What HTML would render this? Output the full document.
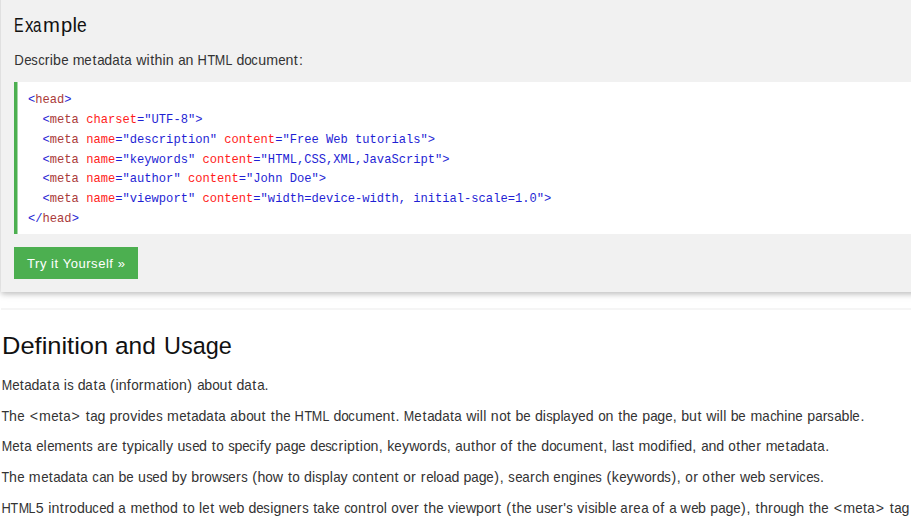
<!DOCTYPE html>
<html><head><meta charset="utf-8">
<style>
html,body{margin:0;padding:0;background:#fff;width:911px;height:519px;overflow:hidden;position:relative}
body{font-family:"Liberation Sans",sans-serif;color:#000}
.ex{position:absolute;left:1px;top:-20px;width:1000px;height:312px;background:#f1f1f1;box-shadow:0 2px 5px 0 rgba(0,0,0,.16),0 2px 8px 0 rgba(0,0,0,.12)}
.t{position:absolute;white-space:pre;left:0}
.p{font-size:14.2px;line-height:20px;color:#333}
.code{position:absolute;left:14px;top:82px;width:1000px;height:152px;background:#fff}
.g1{position:absolute;left:14px;top:82px;width:3px;height:152px;background:#4CAF50}
.g2{position:absolute;left:17px;top:82px;width:1px;height:152px;background:#a5d7a7}
.cl{position:absolute;white-space:pre;font-family:"Liberation Mono",monospace;font-size:12.12px;line-height:20px;color:#1f1fd4;left:28px}
.tn{color:#aa3a3a}.an{color:#ff1c1c}
.btn{position:absolute;left:14px;top:247px;width:124px;height:32px;background:#4CAF50}
.hr{position:absolute;left:1px;top:308px;width:1000px;height:2px;background:#f5f5f5}
.h2{top:332px;font-size:23.7px;line-height:28px;transform-origin:0 0;color:#111}
.w{position:absolute;left:0;width:911px;height:20px}.w span{position:absolute;top:0;white-space:pre;transform-origin:0 0}.w i{position:absolute;top:0;white-space:pre;font-style:normal}
.hx{position:absolute;left:0;top:13px;width:200px;height:24px;font-size:20.5px;line-height:24px;color:#111}.hx span{position:absolute;top:0;white-space:pre;transform-origin:0 0}
</style></head><body>
<div class="ex"></div>
<div class="hx"><span style="left:14.38px;transform:scaleX(0.700)">E</span><span style="left:24.69px;transform:scaleX(0.831)">x</span><span style="left:33.37px;transform:scaleX(0.733)">a</span><span style="left:43.32px;transform:scaleX(0.989)">m</span><span style="left:60.67px;transform:scaleX(0.984)">p</span><span style="left:72.42px;transform:scaleX(1.000)">l</span><span style="left:77.45px;transform:scaleX(0.853)">e</span></div>
<div class="code"></div><div class="g1"></div><div class="g2"></div>
<div class="cl" style="top:90px">&lt;<span class="tn">head</span>&gt;</div>
<div class="cl" style="top:110px">  &lt;<span class="tn">meta</span> <span class="an">charset</span>="UTF-8"&gt;</div>
<div class="cl" style="top:130px">  &lt;<span class="tn">meta</span> <span class="an">name</span>="description" <span class="an">content</span>="Free Web tutorials"&gt;</div>
<div class="cl" style="top:150px">  &lt;<span class="tn">meta</span> <span class="an">name</span>="keywords" <span class="an">content</span>="HTML,CSS,XML,JavaScript"&gt;</div>
<div class="cl" style="top:169px">  &lt;<span class="tn">meta</span> <span class="an">name</span>="author" <span class="an">content</span>="John Doe"&gt;</div>
<div class="cl" style="top:189px">  &lt;<span class="tn">meta</span> <span class="an">name</span>="viewport" <span class="an">content</span>="width=device-width, initial-scale=1.0"&gt;</div>
<div class="cl" style="top:209px">&lt;/<span class="tn">head</span>&gt;</div>
<div class="btn"></div>
<div class="t" style="left:27px;top:256px;font-size:13px;line-height:16px;color:#fff;letter-spacing:0.55px">Try it Yourself »</div>
<div class="hr"></div>
<div class="t h2" style="left:2px;transform:scaleX(1.075)">Definition</div><div class="t h2" style="left:115px;transform:scaleX(1.03)">and</div><div class="t h2" style="left:164px;transform:scaleX(0.99)">Usage</div>
<div class="w p" style="top:50px"><i style="left:14.16px;transform:scaleX(0.933)">D</i><i style="left:23.81px;transform:scaleX(0.937)">e</i><i style="left:31.13px;transform:scaleX(0.911)">s</i><i style="left:37.59px;transform:scaleX(0.911)">c</i><i style="left:44.65px">r</i><i style="left:49.79px">i</i><i style="left:52.98px">b</i><i style="left:60.54px;transform:scaleX(0.937)">e</i><i style="left:72.66px">m</i><i style="left:84.36px;transform:scaleX(0.937)">e</i><i style="left:92.47px">t</i><i style="left:96.67px;transform:scaleX(0.944)">a</i><i style="left:104.26px">d</i><i style="left:111.84px;transform:scaleX(0.944)">a</i><i style="left:119.98px">t</i><i style="left:124.18px;transform:scaleX(0.944)">a</i><i style="left:136.16px">w</i><i style="left:146.48px">i</i><i style="left:150.23px">t</i><i style="left:154.62px">h</i><i style="left:162.61px">i</i><i style="left:165.87px">n</i><i style="left:177.89px;transform:scaleX(0.944)">a</i><i style="left:185.54px">n</i><i style="left:197.31px;transform:scaleX(0.910)">H</i><i style="left:206.58px;transform:scaleX(0.881)">T</i><i style="left:214.05px;transform:scaleX(0.884)">M</i><i style="left:224.70px;transform:scaleX(0.875)">L</i><i style="left:236.38px">d</i><i style="left:244.00px;transform:scaleX(0.954)">o</i><i style="left:251.40px;transform:scaleX(0.911)">c</i><i style="left:258.15px">u</i><i style="left:266.14px">m</i><i style="left:277.84px;transform:scaleX(0.937)">e</i><i style="left:285.46px">n</i><i style="left:293.79px">t</i><i style="left:299.05px">:</i></div>
<div class="w p" style="top:375px"><i style="left:0.81px;transform:scaleX(0.884)">M</i><i style="left:11.70px;transform:scaleX(0.937)">e</i><i style="left:19.81px">t</i><i style="left:24.01px;transform:scaleX(0.944)">a</i><i style="left:31.60px">d</i><i style="left:39.19px;transform:scaleX(0.944)">a</i><i style="left:47.33px">t</i><i style="left:51.53px;transform:scaleX(0.944)">a</i><i style="left:63.68px">i</i><i style="left:66.64px;transform:scaleX(0.911)">s</i><i style="left:77.70px">d</i><i style="left:85.29px;transform:scaleX(0.944)">a</i><i style="left:93.43px">t</i><i style="left:97.63px;transform:scaleX(0.944)">a</i><i style="left:110.11px">(</i><i style="left:115.42px">i</i><i style="left:118.67px">n</i><i style="left:126.75px">f</i><i style="left:130.72px;transform:scaleX(0.954)">o</i><i style="left:138.71px">r</i><i style="left:143.85px">m</i><i style="left:155.57px;transform:scaleX(0.944)">a</i><i style="left:163.71px">t</i><i style="left:168.25px">i</i><i style="left:171.35px;transform:scaleX(0.954)">o</i><i style="left:179.03px">n</i><i style="left:187.35px">)</i><i style="left:196.68px;transform:scaleX(0.944)">a</i><i style="left:204.27px">b</i><i style="left:211.89px;transform:scaleX(0.954)">o</i><i style="left:219.58px">u</i><i style="left:227.92px">t</i><i style="left:236.62px">d</i><i style="left:244.21px;transform:scaleX(0.944)">a</i><i style="left:252.35px">t</i><i style="left:256.55px;transform:scaleX(0.944)">a</i><i style="left:264.50px">.</i></div>
<div class="w p" style="top:406px"><i style="left:0.98px;transform:scaleX(0.881)">T</i><i style="left:9.12px">h</i><i style="left:16.74px;transform:scaleX(0.937)">e</i><i style="left:29.67px">&lt;</i><i style="left:39.00px">m</i><i style="left:50.70px;transform:scaleX(0.937)">e</i><i style="left:58.81px">t</i><i style="left:63.01px;transform:scaleX(0.944)">a</i><i style="left:71.60px">&gt;</i><i style="left:85.65px">t</i><i style="left:89.85px;transform:scaleX(0.944)">a</i><i style="left:97.44px">g</i><i style="left:109.53px">p</i><i style="left:117.62px">r</i><i style="left:122.45px;transform:scaleX(0.954)">o</i><i style="left:130.29px">v</i><i style="left:137.62px">i</i><i style="left:140.82px">d</i><i style="left:148.38px;transform:scaleX(0.937)">e</i><i style="left:155.70px;transform:scaleX(0.911)">s</i><i style="left:166.96px">m</i><i style="left:178.66px;transform:scaleX(0.937)">e</i><i style="left:186.76px">t</i><i style="left:190.96px;transform:scaleX(0.944)">a</i><i style="left:198.55px">d</i><i style="left:206.14px;transform:scaleX(0.944)">a</i><i style="left:214.28px">t</i><i style="left:218.48px;transform:scaleX(0.944)">a</i><i style="left:230.30px;transform:scaleX(0.944)">a</i><i style="left:237.89px">b</i><i style="left:245.51px;transform:scaleX(0.954)">o</i><i style="left:253.20px">u</i><i style="left:261.54px">t</i><i style="left:270.79px">t</i><i style="left:275.18px">h</i><i style="left:282.80px;transform:scaleX(0.937)">e</i><i style="left:294.35px;transform:scaleX(0.910)">H</i><i style="left:303.62px;transform:scaleX(0.881)">T</i><i style="left:311.09px;transform:scaleX(0.884)">M</i><i style="left:321.73px;transform:scaleX(0.875)">L</i><i style="left:333.41px">d</i><i style="left:341.04px;transform:scaleX(0.954)">o</i><i style="left:348.43px;transform:scaleX(0.911)">c</i><i style="left:355.19px">u</i><i style="left:363.18px">m</i><i style="left:374.87px;transform:scaleX(0.937)">e</i><i style="left:382.49px">n</i><i style="left:390.83px">t</i><i style="left:395.53px">.</i><i style="left:403.44px;transform:scaleX(0.884)">M</i><i style="left:414.33px;transform:scaleX(0.937)">e</i><i style="left:422.44px">t</i><i style="left:426.64px;transform:scaleX(0.944)">a</i><i style="left:434.23px">d</i><i style="left:441.82px;transform:scaleX(0.944)">a</i><i style="left:449.95px">t</i><i style="left:454.15px;transform:scaleX(0.944)">a</i><i style="left:466.14px">w</i><i style="left:476.45px">i</i><i style="left:479.85px">l</i><i style="left:483.25px">l</i><i style="left:490.87px">n</i><i style="left:498.56px;transform:scaleX(0.954)">o</i><i style="left:506.73px">t</i><i style="left:515.43px">b</i><i style="left:522.99px;transform:scaleX(0.937)">e</i><i style="left:534.91px">d</i><i style="left:542.84px">i</i><i style="left:545.80px;transform:scaleX(0.911)">s</i><i style="left:552.50px">p</i><i style="left:560.43px">l</i><i style="left:563.48px;transform:scaleX(0.944)">a</i><i style="left:571.28px">y</i><i style="left:578.25px;transform:scaleX(0.937)">e</i><i style="left:585.80px">d</i><i style="left:597.80px;transform:scaleX(0.954)">o</i><i style="left:605.48px">n</i><i style="left:618.18px">t</i><i style="left:622.58px">h</i><i style="left:630.20px;transform:scaleX(0.937)">e</i><i style="left:642.13px">p</i><i style="left:649.71px;transform:scaleX(0.944)">a</i><i style="left:657.30px">g</i><i style="left:664.86px;transform:scaleX(0.937)">e</i><i style="left:672.78px">,</i><i style="left:681.30px">b</i><i style="left:689.08px">u</i><i style="left:697.42px">t</i><i style="left:706.15px">w</i><i style="left:716.47px">i</i><i style="left:719.87px">l</i><i style="left:723.26px">l</i><i style="left:730.82px">b</i><i style="left:738.38px;transform:scaleX(0.937)">e</i><i style="left:750.50px">m</i><i style="left:762.23px;transform:scaleX(0.944)">a</i><i style="left:769.59px;transform:scaleX(0.911)">c</i><i style="left:776.34px">h</i><i style="left:784.33px">i</i><i style="left:787.59px">n</i><i style="left:795.21px;transform:scaleX(0.937)">e</i><i style="left:807.13px">p</i><i style="left:814.72px;transform:scaleX(0.944)">a</i><i style="left:822.67px">r</i><i style="left:827.37px;transform:scaleX(0.911)">s</i><i style="left:833.93px;transform:scaleX(0.944)">a</i><i style="left:841.52px">b</i><i style="left:849.45px">l</i><i style="left:852.47px;transform:scaleX(0.937)">e</i><i style="left:860.39px">.</i></div>
<div class="w p" style="top:436px"><i style="left:0.81px;transform:scaleX(0.884)">M</i><i style="left:11.70px;transform:scaleX(0.937)">e</i><i style="left:19.81px">t</i><i style="left:24.01px;transform:scaleX(0.944)">a</i><i style="left:35.80px;transform:scaleX(0.937)">e</i><i style="left:43.56px">l</i><i style="left:46.58px;transform:scaleX(0.937)">e</i><i style="left:54.34px">m</i><i style="left:66.04px;transform:scaleX(0.937)">e</i><i style="left:73.66px">n</i><i style="left:82.00px">t</i><i style="left:86.10px;transform:scaleX(0.911)">s</i><i style="left:97.02px;transform:scaleX(0.944)">a</i><i style="left:104.97px">r</i><i style="left:109.74px;transform:scaleX(0.937)">e</i><i style="left:122.21px">t</i><i style="left:126.75px">y</i><i style="left:133.89px">p</i><i style="left:141.82px">i</i><i style="left:144.78px;transform:scaleX(0.911)">c</i><i style="left:151.33px;transform:scaleX(0.944)">a</i><i style="left:159.13px">l</i><i style="left:162.52px">l</i><i style="left:165.92px">y</i><i style="left:177.48px">u</i><i style="left:185.04px;transform:scaleX(0.911)">s</i><i style="left:191.57px;transform:scaleX(0.937)">e</i><i style="left:199.12px">d</i><i style="left:211.76px">t</i><i style="left:216.00px;transform:scaleX(0.954)">o</i><i style="left:227.76px;transform:scaleX(0.911)">s</i><i style="left:234.45px">p</i><i style="left:242.01px;transform:scaleX(0.937)">e</i><i style="left:249.33px;transform:scaleX(0.911)">c</i><i style="left:256.23px">i</i><i style="left:259.71px">f</i><i style="left:264.00px">y</i><i style="left:275.49px">p</i><i style="left:283.08px;transform:scaleX(0.944)">a</i><i style="left:290.67px">g</i><i style="left:298.23px;transform:scaleX(0.937)">e</i><i style="left:310.15px">d</i><i style="left:317.71px;transform:scaleX(0.937)">e</i><i style="left:325.03px;transform:scaleX(0.911)">s</i><i style="left:331.49px;transform:scaleX(0.911)">c</i><i style="left:338.55px">r</i><i style="left:343.69px">i</i><i style="left:346.88px">p</i><i style="left:355.16px">t</i><i style="left:359.70px">i</i><i style="left:362.79px;transform:scaleX(0.954)">o</i><i style="left:370.48px">n</i><i style="left:378.63px">,</i><i style="left:387.35px">k</i><i style="left:394.32px;transform:scaleX(0.937)">e</i><i style="left:402.08px">y</i><i style="left:409.25px">w</i><i style="left:419.26px;transform:scaleX(0.954)">o</i><i style="left:427.25px">r</i><i style="left:432.18px">d</i><i style="left:439.67px;transform:scaleX(0.911)">s</i><i style="left:446.73px">,</i><i style="left:455.11px;transform:scaleX(0.944)">a</i><i style="left:462.76px">u</i><i style="left:471.10px">t</i><i style="left:475.49px">h</i><i style="left:483.18px;transform:scaleX(0.954)">o</i><i style="left:491.17px">r</i><i style="left:500.37px;transform:scaleX(0.954)">o</i><i style="left:508.28px">f</i><i style="left:517.27px">t</i><i style="left:521.67px">h</i><i style="left:529.29px;transform:scaleX(0.937)">e</i><i style="left:541.21px">d</i><i style="left:548.84px;transform:scaleX(0.954)">o</i><i style="left:556.23px;transform:scaleX(0.911)">c</i><i style="left:562.99px">u</i><i style="left:570.98px">m</i><i style="left:582.67px;transform:scaleX(0.937)">e</i><i style="left:590.29px">n</i><i style="left:598.63px">t</i><i style="left:603.33px">,</i><i style="left:612.05px">l</i><i style="left:615.11px;transform:scaleX(0.944)">a</i><i style="left:622.46px;transform:scaleX(0.911)">s</i><i style="left:629.70px">t</i><i style="left:638.61px">m</i><i style="left:650.37px;transform:scaleX(0.954)">o</i><i style="left:658.00px">d</i><i style="left:665.93px">i</i><i style="left:669.41px">f</i><i style="left:673.69px">i</i><i style="left:676.72px;transform:scaleX(0.937)">e</i><i style="left:684.27px">d</i><i style="left:692.36px">,</i><i style="left:700.74px;transform:scaleX(0.944)">a</i><i style="left:708.39px">n</i><i style="left:716.18px">d</i><i style="left:728.17px;transform:scaleX(0.954)">o</i><i style="left:736.34px">t</i><i style="left:740.74px">h</i><i style="left:748.36px;transform:scaleX(0.937)">e</i><i style="left:756.28px">r</i><i style="left:765.78px">m</i><i style="left:777.48px;transform:scaleX(0.937)">e</i><i style="left:785.58px">t</i><i style="left:789.78px;transform:scaleX(0.944)">a</i><i style="left:797.37px">d</i><i style="left:804.96px;transform:scaleX(0.944)">a</i><i style="left:813.10px">t</i><i style="left:817.30px;transform:scaleX(0.944)">a</i><i style="left:825.25px">.</i></div>
<div class="w p" style="top:467px"><i style="left:0.98px;transform:scaleX(0.881)">T</i><i style="left:9.12px">h</i><i style="left:16.74px;transform:scaleX(0.937)">e</i><i style="left:28.86px">m</i><i style="left:40.56px;transform:scaleX(0.937)">e</i><i style="left:48.66px">t</i><i style="left:52.86px;transform:scaleX(0.944)">a</i><i style="left:60.45px">d</i><i style="left:68.04px;transform:scaleX(0.944)">a</i><i style="left:76.18px">t</i><i style="left:80.38px;transform:scaleX(0.944)">a</i><i style="left:92.10px;transform:scaleX(0.911)">c</i><i style="left:98.66px;transform:scaleX(0.944)">a</i><i style="left:106.31px">n</i><i style="left:118.46px">b</i><i style="left:126.02px;transform:scaleX(0.937)">e</i><i style="left:138.00px">u</i><i style="left:145.56px;transform:scaleX(0.911)">s</i><i style="left:152.08px;transform:scaleX(0.937)">e</i><i style="left:159.64px">d</i><i style="left:171.73px">b</i><i style="left:179.66px">y</i><i style="left:191.16px">b</i><i style="left:199.25px">r</i><i style="left:204.08px;transform:scaleX(0.954)">o</i><i style="left:211.74px">w</i><i style="left:221.62px;transform:scaleX(0.911)">s</i><i style="left:228.15px;transform:scaleX(0.937)">e</i><i style="left:236.07px">r</i><i style="left:240.76px;transform:scaleX(0.911)">s</i><i style="left:252.35px">(</i><i style="left:257.51px">h</i><i style="left:265.20px;transform:scaleX(0.954)">o</i><i style="left:272.86px">w</i><i style="left:287.89px">t</i><i style="left:292.12px;transform:scaleX(0.954)">o</i><i style="left:304.11px">d</i><i style="left:312.04px">i</i><i style="left:315.00px;transform:scaleX(0.911)">s</i><i style="left:321.70px">p</i><i style="left:329.63px">l</i><i style="left:332.68px;transform:scaleX(0.944)">a</i><i style="left:340.48px">y</i><i style="left:351.74px;transform:scaleX(0.911)">c</i><i style="left:358.34px;transform:scaleX(0.954)">o</i><i style="left:366.03px">n</i><i style="left:374.36px">t</i><i style="left:378.53px;transform:scaleX(0.937)">e</i><i style="left:386.15px">n</i><i style="left:394.49px">t</i><i style="left:403.09px;transform:scaleX(0.954)">o</i><i style="left:411.08px">r</i><i style="left:420.74px">r</i><i style="left:425.50px;transform:scaleX(0.937)">e</i><i style="left:433.26px">l</i><i style="left:436.36px;transform:scaleX(0.954)">o</i><i style="left:443.85px;transform:scaleX(0.944)">a</i><i style="left:451.44px">d</i><i style="left:463.53px">p</i><i style="left:471.12px;transform:scaleX(0.944)">a</i><i style="left:478.71px">g</i><i style="left:486.26px;transform:scaleX(0.937)">e</i><i style="left:494.35px">)</i><i style="left:499.81px">,</i><i style="left:508.10px;transform:scaleX(0.911)">s</i><i style="left:514.62px;transform:scaleX(0.937)">e</i><i style="left:522.04px;transform:scaleX(0.944)">a</i><i style="left:530.00px">r</i><i style="left:534.69px;transform:scaleX(0.911)">c</i><i style="left:541.45px">h</i><i style="left:553.43px;transform:scaleX(0.937)">e</i><i style="left:561.05px">n</i><i style="left:568.84px">g</i><i style="left:576.77px">i</i><i style="left:580.03px">n</i><i style="left:587.65px;transform:scaleX(0.937)">e</i><i style="left:594.97px;transform:scaleX(0.911)">s</i><i style="left:606.56px">(</i><i style="left:611.86px">k</i><i style="left:618.83px;transform:scaleX(0.937)">e</i><i style="left:626.60px">y</i><i style="left:633.76px">w</i><i style="left:643.77px;transform:scaleX(0.954)">o</i><i style="left:651.76px">r</i><i style="left:656.70px">d</i><i style="left:664.19px;transform:scaleX(0.911)">s</i><i style="left:671.41px">)</i><i style="left:676.87px">,</i><i style="left:685.29px;transform:scaleX(0.954)">o</i><i style="left:693.28px">r</i><i style="left:702.48px;transform:scaleX(0.954)">o</i><i style="left:710.65px">t</i><i style="left:715.05px">h</i><i style="left:722.67px;transform:scaleX(0.937)">e</i><i style="left:730.59px">r</i><i style="left:739.92px">w</i><i style="left:749.86px;transform:scaleX(0.937)">e</i><i style="left:757.42px">b</i><i style="left:769.28px;transform:scaleX(0.911)">s</i><i style="left:775.80px;transform:scaleX(0.937)">e</i><i style="left:783.72px">r</i><i style="left:788.86px">v</i><i style="left:796.20px">i</i><i style="left:799.16px;transform:scaleX(0.911)">c</i><i style="left:805.69px;transform:scaleX(0.937)">e</i><i style="left:813.01px;transform:scaleX(0.911)">s</i><i style="left:820.07px">.</i></div>
<div class="w p" style="top:498px"><i style="left:1.04px;transform:scaleX(0.910)">H</i><i style="left:10.31px;transform:scaleX(0.881)">T</i><i style="left:17.78px;transform:scaleX(0.884)">M</i><i style="left:28.42px;transform:scaleX(0.875)">L</i><i style="left:35.82px">5</i><i style="left:48.20px">i</i><i style="left:51.45px">n</i><i style="left:59.79px">t</i><i style="left:64.49px">r</i><i style="left:69.32px;transform:scaleX(0.954)">o</i><i style="left:76.95px">d</i><i style="left:84.73px">u</i><i style="left:92.29px;transform:scaleX(0.911)">c</i><i style="left:98.81px;transform:scaleX(0.937)">e</i><i style="left:106.37px">d</i><i style="left:118.32px;transform:scaleX(0.944)">a</i><i style="left:130.48px">m</i><i style="left:142.18px;transform:scaleX(0.937)">e</i><i style="left:150.28px">t</i><i style="left:154.68px">h</i><i style="left:162.37px;transform:scaleX(0.954)">o</i><i style="left:170.00px">d</i><i style="left:182.63px">t</i><i style="left:186.87px;transform:scaleX(0.954)">o</i><i style="left:199.07px">l</i><i style="left:202.09px;transform:scaleX(0.937)">e</i><i style="left:210.20px">t</i><i style="left:218.93px">w</i><i style="left:228.88px;transform:scaleX(0.937)">e</i><i style="left:236.43px">b</i><i style="left:248.52px">d</i><i style="left:256.08px;transform:scaleX(0.937)">e</i><i style="left:263.41px;transform:scaleX(0.911)">s</i><i style="left:270.30px">i</i><i style="left:273.50px">g</i><i style="left:281.29px">n</i><i style="left:288.91px;transform:scaleX(0.937)">e</i><i style="left:296.83px">r</i><i style="left:301.52px;transform:scaleX(0.911)">s</i><i style="left:313.13px">t</i><i style="left:317.33px;transform:scaleX(0.944)">a</i><i style="left:325.13px">k</i><i style="left:332.09px;transform:scaleX(0.937)">e</i><i style="left:343.78px;transform:scaleX(0.911)">c</i><i style="left:350.38px;transform:scaleX(0.954)">o</i><i style="left:358.07px">n</i><i style="left:366.40px">t</i><i style="left:371.10px">r</i><i style="left:375.93px;transform:scaleX(0.954)">o</i><i style="left:383.76px">l</i><i style="left:391.22px;transform:scaleX(0.954)">o</i><i style="left:399.06px">v</i><i style="left:406.02px;transform:scaleX(0.937)">e</i><i style="left:413.94px">r</i><i style="left:423.79px">t</i><i style="left:428.19px">h</i><i style="left:435.81px;transform:scaleX(0.937)">e</i><i style="left:447.94px">v</i><i style="left:455.27px">i</i><i style="left:458.30px;transform:scaleX(0.937)">e</i><i style="left:465.89px">w</i><i style="left:476.00px">p</i><i style="left:483.63px;transform:scaleX(0.954)">o</i><i style="left:491.62px">r</i><i style="left:497.10px">t</i><i style="left:506.33px">(</i><i style="left:511.98px">t</i><i style="left:516.38px">h</i><i style="left:524.00px;transform:scaleX(0.937)">e</i><i style="left:535.98px">u</i><i style="left:543.53px;transform:scaleX(0.911)">s</i><i style="left:550.06px;transform:scaleX(0.937)">e</i><i style="left:557.98px">r</i><i style="left:563.31px">&#x27;</i><i style="left:566.02px;transform:scaleX(0.911)">s</i><i style="left:577.28px">v</i><i style="left:584.62px">i</i><i style="left:587.58px;transform:scaleX(0.911)">s</i><i style="left:594.48px">i</i><i style="left:597.67px">b</i><i style="left:605.60px">l</i><i style="left:608.63px;transform:scaleX(0.937)">e</i><i style="left:620.41px;transform:scaleX(0.944)">a</i><i style="left:628.36px">r</i><i style="left:633.13px;transform:scaleX(0.937)">e</i><i style="left:640.55px;transform:scaleX(0.944)">a</i><i style="left:652.40px;transform:scaleX(0.954)">o</i><i style="left:660.32px">f</i><i style="left:668.62px;transform:scaleX(0.944)">a</i><i style="left:680.61px">w</i><i style="left:690.55px;transform:scaleX(0.937)">e</i><i style="left:698.11px">b</i><i style="left:710.20px">p</i><i style="left:717.79px;transform:scaleX(0.944)">a</i><i style="left:725.38px">g</i><i style="left:732.94px;transform:scaleX(0.937)">e</i><i style="left:741.02px">)</i><i style="left:746.49px">,</i><i style="left:755.55px">t</i><i style="left:759.95px">h</i><i style="left:768.10px">r</i><i style="left:772.93px;transform:scaleX(0.954)">o</i><i style="left:780.62px">u</i><i style="left:788.41px">g</i><i style="left:796.20px">h</i><i style="left:808.90px">t</i><i style="left:813.29px">h</i><i style="left:820.91px;transform:scaleX(0.937)">e</i><i style="left:833.84px">&lt;</i><i style="left:843.18px">m</i><i style="left:854.88px;transform:scaleX(0.937)">e</i><i style="left:862.99px">t</i><i style="left:867.19px;transform:scaleX(0.944)">a</i><i style="left:875.78px">&gt;</i><i style="left:889.83px">t</i><i style="left:894.03px;transform:scaleX(0.944)">a</i><i style="left:901.62px">g</i></div>
</body></html>
